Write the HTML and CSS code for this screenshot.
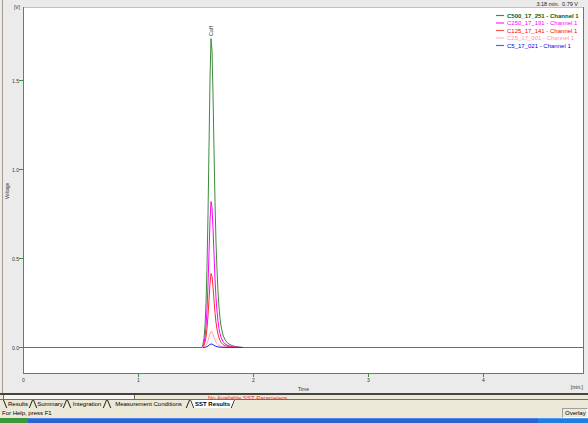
FILE: index.html
```html
<!DOCTYPE html>
<html lang="en">
<head>
    <meta charset="UTF-8">
    <title>Chromatogram Overlay</title>
    <link rel="stylesheet" href="styles.css">
</head>
<body>
<div class="window">

    <div class="chart">
        <svg class="plot" width="588" height="393" viewBox="0 0 588 393">
            <line class="edge" x1="2.5" y1="0" x2="2.5" y2="393"/>

            <!-- plot box -->
            <rect class="frame" x="23.5" y="7.5" width="560" height="366"/>
            <line class="frame-top" x1="24" y1="7.5" x2="583" y2="7.5"/>

            <!-- y axis -->
            <path class="tick" d="M19,80.5H23 M19,169.5H23 M19,258.5H23 M19,347.5H23"/>
            <text class="axis-label" x="20" y="8.5" text-anchor="end">[V]</text>
            <text class="axis-label" x="19" y="82.5" text-anchor="end">1.5</text>
            <text class="axis-label" x="19" y="171.5" text-anchor="end">1.0</text>
            <text class="axis-label" x="19" y="260.5" text-anchor="end">0.5</text>
            <text class="axis-label" x="19" y="349.5" text-anchor="end">0.0</text>
            <text class="axis-label" transform="translate(8.5 191) rotate(-90)" text-anchor="middle">Voltage</text>

            <!-- x axis -->
            <path class="tick" d="M138.5,374V377 M253.5,374V377 M368.5,374V377 M483.5,374V377"/>
            <text class="axis-label" x="23.5" y="382" text-anchor="middle">0</text>
            <text class="axis-label" x="138.5" y="382" text-anchor="middle">1</text>
            <text class="axis-label" x="253.5" y="382" text-anchor="middle">2</text>
            <text class="axis-label" x="368.5" y="382" text-anchor="middle">3</text>
            <text class="axis-label" x="483.5" y="382" text-anchor="middle">4</text>
            <text class="axis-label" x="298" y="390.5">Time</text>
            <text class="axis-label" x="583" y="388.5" text-anchor="end">[min.]</text>

            <!-- cursor readout -->
            <text class="readout" x="578" y="5.5" text-anchor="end">3.18 min.&#160;&#160;0.79 V</text>

            <!-- traces: C500 first (full baseline), smaller standards on top -->
            <path class="trace c500" d="M23.5,347.5 H202 L203,344.4 L204,338.2 L205,325.9 L206,304.2 L207,267.2 L208,214.6 L209,146.6 L210,78.7 L211,38.5 L212,50.9 L213,94.1 L214,149.7 L215,202.3 L216,242.4 L217,270.2 L218,291.9 L219,307.3 L220,318.1 L221,325.9 L223,335.1 L225,339.8 L228,343.5 L232,345.6 L237,346.9 L243,347.5 H583"/>
            <path class="trace c250" d="M202,347.5 L203,346 L204,343.1 L205,337.3 L206,327.1 L207,309.5 L208,284.7 L209,252.6 L210,220.5 L211,201.5 L212,207.3 L213,227.8 L214,254.1 L215,278.9 L216,297.9 L217,311 L218,321.2 L219,328.5 L220,333.6 L221,337.3 L223,341.7 L225,343.9 L228,345.6 L232,346.6 L237,347.2 L243,347.5"/>
            <path class="trace c125" d="M202,347.5 L203,346.8 L204,345.3 L205,342.3 L206,337.1 L207,328.3 L208,315.7 L209,299.4 L210,283.1 L211,273.5 L212,276.5 L213,286.8 L214,300.1 L215,312.7 L216,322.3 L217,329 L218,334.2 L219,337.9 L220,340.5 L221,342.3 L223,344.5 L225,345.7 L228,346.5 L232,347.1 L237,347.4 L243,347.5"/>
            <path class="trace c25" d="M202,347.5 L203,347.3 L204,347 L205,346.4 L206,345.3 L207,343.3 L208,340.6 L209,337.1 L210,333.6 L211,331.5 L212,332.1 L213,334.4 L214,337.3 L215,340 L216,342.1 L217,343.5 L218,344.6 L219,345.4 L220,346 L221,346.4 L223,346.9 L225,347.1 L228,347.3 L232,347.4 L243,347.5"/>
            <path class="trace c5" d="M203,347.5 L205,347.3 L206,347 L207,346.6 L208,346 L209,345.2 L210,344.5 L211,344 L212,344.1 L213,344.6 L214,345.3 L215,345.9 L216,346.3 L217,346.6 L218,346.9 L220,347.2 L225,347.4 L243,347.5"/>

            <text class="peak-name" transform="translate(213 31) rotate(-90)" text-anchor="middle">Caff</text>

            <!-- legend -->
            <g class="legend">
                <line class="key c500" x1="496" y1="15.5" x2="504" y2="15.5"/>
                <text class="name c500 bold" x="507" y="17.5">C500_17_251 - Channel 1</text>
                <line class="key c250" x1="496" y1="23" x2="504" y2="23"/>
                <text class="name c250" x="507" y="25">C250_17_191 - Channel 1</text>
                <line class="key c125" x1="496" y1="30.5" x2="504" y2="30.5"/>
                <text class="name c125" x="507" y="32.5">C125_17_141 - Channel 1</text>
                <line class="key c25" x1="496" y1="38" x2="504" y2="38"/>
                <text class="name c25" x="507" y="40">C25_17_001 - Channel 1</text>
                <line class="key c5" x1="496" y1="45.5" x2="504" y2="45.5"/>
                <text class="name c5" x="507" y="47.5">C5_17_021 - Channel 1</text>
            </g>
        </svg>
    </div>

    <div class="hscroll">
        <div class="thumb"></div>
        <span class="notice">No Available SST Parameters</span>
    </div>

    <div class="tabs">
        <div class="tab tab-results">Results</div>
        <div class="tab tab-summary">Summary</div>
        <div class="tab tab-integration">Integration</div>
        <div class="tab tab-conditions">Measurement Conditions</div>
        <div class="tab tab-sst active">SST Results</div>
    </div>

    <div class="statusbar">
        <span class="help">For Help, press F1</span>
        <span class="pane">Overlay</span>
    </div>

    <div class="taskbar">
        <div class="start"></div>
        <div class="bar"></div>
        <div class="tray"></div>
    </div>

</div>
</body>
</html>
```

FILE: styles.css
```css
body {
    margin: 0;
    font-family: "Liberation Sans", Arial, sans-serif;
    font-size: 6px;
    color: #000;
    background-color: #ece9d8;
}
.window {
    width: 588px;
    height: 423px;
    display: flex;
    flex-direction: column;
    overflow: hidden;
}

/* chart */
.chart {
    height: 393px;
    flex: none;
    background-color: #ebebeb;
}
.plot {
    display: block;
}
.plot text {
    font-family: "Liberation Sans", Arial, sans-serif;
}
.edge {
    stroke: #a79d8b;
}
.frame {
    fill: #fff;
    stroke: #4b8f4b;
}
.frame-top {
    stroke: #a9d2a9;
}
.tick {
    stroke: #3f8c3f;
    fill: none;
}
.axis-label {
    font-size: 5px;
    fill: #333;
}
.readout {
    font-size: 5.5px;
    fill: #222;
}
.peak-name {
    font-size: 5.5px;
    fill: #333;
}
.trace {
    fill: none;
    stroke-width: 1;
    stroke-linejoin: round;
}
.trace.c500 { stroke: #3d8b3d; }
.trace.c250 { stroke: #f0f; }
.trace.c125 { stroke: #ff2a2a; }
.trace.c25 { stroke: #ffa3a3; }
.trace.c5 { stroke: #2424ff; }

.legend .key {
    stroke-width: 1.2;
}
.legend .name {
    font-size: 6px;
}
.legend .bold {
    font-weight: bold;
}
.key.c500 { stroke: #3f8f3f; }
.key.c250 { stroke: #ff7aff; stroke-width: 2; }
.key.c125 { stroke: #ff5050; }
.key.c25 { stroke: #ffbcbc; }
.key.c5 { stroke: #5a5aff; }
.name.c500 { fill: #0f5a0f; }
.name.c250 { fill: #f0f; }
.name.c125 { fill: #f00; }
.name.c25 { fill: #ff9898; }
.name.c5 { fill: #0000f0; }

/* splitter / scroll strip */
.hscroll {
    flex: none;
    height: 4px;
    display: flex;
    position: relative;
    overflow: hidden;
    border-top: 2px solid #48443b;
    border-bottom: 1px solid #6e6e6e;
    background-color: #ece9d8;
}
.thumb {
    width: 130px;
    margin-left: 3px;
    background-color: #f6f5f0;
    border-left: 1px solid #6a6a6a;
    border-right: 1px solid #6a6a6a;
}
.notice {
    position: absolute;
    left: 208px;
    top: 0;
    color: #e83030;
    font-size: 6px;
    line-height: 7px;
    white-space: nowrap;
}

/* sheet tabs */
.tabs {
    flex: none;
    height: 8px;
    display: flex;
    padding-left: 3px;
    background-color: #ece9d8;
}
.tab {
    position: relative;
    line-height: 8px;
    text-align: center;
    white-space: nowrap;
}
.tab::before,
.tab::after {
    content: "";
    position: absolute;
    top: 0;
    bottom: 0;
    border-left: 1px solid #222;
    transform-origin: top;
}
.tab::before {
    left: 0;
    transform: skewX(22deg);
}
.tab::after {
    right: 0;
    transform: skewX(-22deg);
}
.tab-results { width: 30px; }
.tab-summary { width: 34px; }
.tab-integration { width: 40px; }
.tab-conditions { width: 83px; }
.tab-sst { width: 45px; }
.tab.active {
    font-weight: bold;
    background-color: #fff;
    clip-path: polygon(0 0, 100% 0, calc(100% - 3px) 100%, 3px 100%);
}

/* status bar */
.statusbar {
    flex: none;
    height: 10px;
    display: flex;
    justify-content: space-between;
    align-items: center;
    background-color: #ece9d8;
}
.help {
    padding-left: 2px;
}
.pane {
    width: 21px;
    height: 8px;
    line-height: 8px;
    padding: 0 1px 0 2px;
    border: 1px solid;
    border-color: #a0a0a0 #fff #fff #a0a0a0;
}

/* desktop taskbar edge */
.taskbar {
    flex: none;
    height: 5px;
    display: flex;
}
.start {
    width: 28px;
    background-color: #3c963c;
}
.bar {
    flex: 1;
    background-color: #2d62d2;
    border-top: 1px solid #4f86e8;
}
.tray {
    width: 50px;
    background-color: #1f7ee0;
    border-top: 1px solid #4aa0ef;
}
```
